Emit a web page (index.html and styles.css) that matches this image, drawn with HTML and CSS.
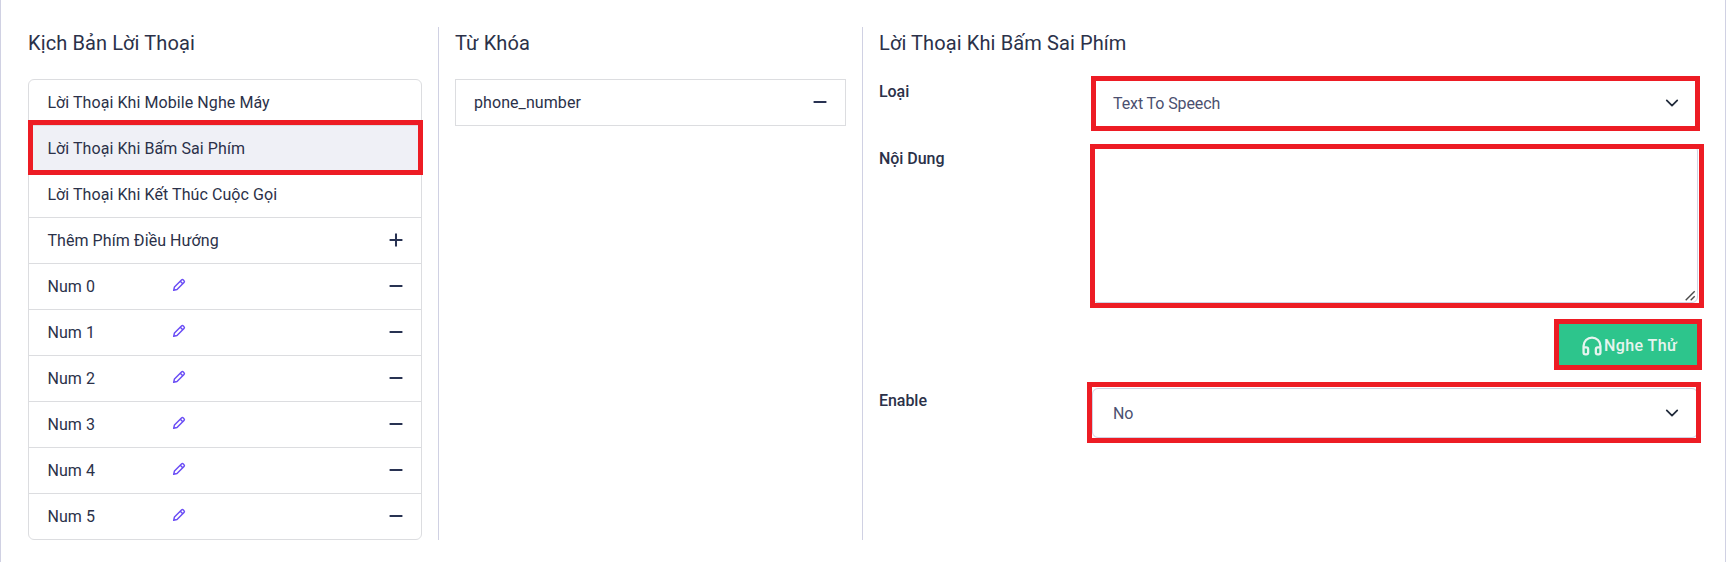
FILE: index.html
```html
<!DOCTYPE html>
<html lang="vi">
<head>
<meta charset="utf-8">
<title>Kịch Bản Lời Thoại</title>
<link rel="stylesheet" href="styles.css">
</head>
<body>
<svg class="defs" aria-hidden="true">
  <symbol id="minus" viewBox="0 0 24 24"><path d="M5 10.900h14v2.200H5z"/></symbol>
  <symbol id="plus" viewBox="0 0 24 24"><path d="M19 10.900h-5.900V5h-2.200v5.900H5v2.200h5.900V19h2.200v-5.900H19z"/></symbol>
  <symbol id="pencil" viewBox="0 0 24 24"><path fill="none" stroke="currentColor" stroke-width="2.200" stroke-linejoin="round" d="m4 20 1.200-5L15.700 4.500a2 2 0 0 1 2.800 0l1 1a2 2 0 0 1 0 2.800L9 18.800zM14 6.500l3.500 3.500"/></symbol>
  <symbol id="headphone" viewBox="0 0 24 24"><path fill="none" stroke="currentColor" stroke-width="2.500" d="M2.800 18.500V12a9.200 9.200 0 0 1 18.400 0v6.500M2.800 13.600h3A2 2 0 0 1 7.800 15.600v3.600A2 2 0 0 1 5.800 21.200H4.800A2 2 0 0 1 2.800 19.200zM21.200 13.600h-3a2 2 0 0 0-2 2v3.600a2 2 0 0 0 2 2h1a2 2 0 0 0 2-2z"/></symbol>
  <symbol id="chevron" viewBox="0 0 16 16"><path fill="none" stroke="currentColor" stroke-width="2" stroke-linecap="round" stroke-linejoin="round" d="m2 5 6 6 6-6"/></symbol>
</svg>
<main class="card">
  <section class="col scripts">
    <h5 class="title">Kịch Bản Lời Thoại</h5>
    <ul class="list rounded">
      <li class="item">Lời Thoại Khi Mobile Nghe Máy</li>
      <li class="item active">Lời Thoại Khi Bấm Sai Phím<span class="mark mark-item"></span></li>
      <li class="item">Lời Thoại Khi Kết Thúc Cuộc Gọi</li>
      <li class="item">Thêm Phím Điều Hướng<svg class="icon end"><use href="#plus"/></svg></li>
      <li class="item"><span class="key">Num 0</span><svg class="edit"><use href="#pencil"/></svg><svg class="icon end"><use href="#minus"/></svg></li>
      <li class="item"><span class="key">Num 1</span><svg class="edit"><use href="#pencil"/></svg><svg class="icon end"><use href="#minus"/></svg></li>
      <li class="item"><span class="key">Num 2</span><svg class="edit"><use href="#pencil"/></svg><svg class="icon end"><use href="#minus"/></svg></li>
      <li class="item"><span class="key">Num 3</span><svg class="edit"><use href="#pencil"/></svg><svg class="icon end"><use href="#minus"/></svg></li>
      <li class="item"><span class="key">Num 4</span><svg class="edit"><use href="#pencil"/></svg><svg class="icon end"><use href="#minus"/></svg></li>
      <li class="item"><span class="key">Num 5</span><svg class="edit"><use href="#pencil"/></svg><svg class="icon end"><use href="#minus"/></svg></li>
    </ul>
  </section>
  <section class="col keywords">
    <h5 class="title">Từ Khóa</h5>
    <ul class="list">
      <li class="item">phone_number<svg class="icon end"><use href="#minus"/></svg></li>
    </ul>
  </section>
  <section class="col detail">
    <h5 class="title">Lời Thoại Khi Bấm Sai Phím</h5>
    <div class="field">
      <span class="label">Loại</span>
      <div class="control select">Text To Speech<svg class="chevron"><use href="#chevron"/></svg><span class="mark mark-type"></span></div>
    </div>
    <div class="field">
      <span class="label">Nội Dung</span>
      <div class="control area"><textarea class="text"></textarea><svg class="grip" viewBox="0 0 11 11"><path d="M.7 10.300 9.700 1.300M5.700 10.300l4-4"/></svg><span class="mark mark-area"></span></div>
    </div>
    <div class="actions">
      <button class="listen"><svg class="headphone"><use href="#headphone"/></svg>Nghe Thử<span class="mark mark-listen"></span></button>
    </div>
    <div class="field">
      <span class="label label-enable">Enable</span>
      <div class="control select">No<svg class="chevron"><use href="#chevron"/></svg><span class="mark mark-enable"></span></div>
    </div>
  </section>
</main>
</body>
</html>
```
FILE: styles.css
```css
* { box-sizing: border-box; }
body {
  margin: 0;
  background: #fff;
  color: #2b3149;
  font: 400 16px/24px Roboto, "Noto Sans", sans-serif;
  letter-spacing: 0.075px;
  overflow: hidden;
}
.defs { position: absolute; width: 0; height: 0; }
.card {
  display: flex;
  align-items: flex-start;
  width: 1726px;
  height: 562px;
  padding: 27px 26px 0 27px;
  border: solid #d0d1e3;
  border-width: 0 1px;
}
.col { flex-shrink: 0; height: 513px; }
.scripts { width: 410px; padding-right: 16px; }
.keywords { width: 424px; padding: 0 16px; border-left: 1px solid #d0d1e3; }
.detail { width: 837px; padding-left: 16px; border-left: 1px solid #d0d1e3; }
.title {
  margin: 0 0 20px;
  padding-top: 1px;
  height: 32px;
  font-size: 20px;
  line-height: 30px;
  font-weight: 400;
  letter-spacing: 0.11px;
}
.list {
  margin: 0;
  padding: 0;
  list-style: none;
  border: 1px solid #dcdde0;
}
.rounded { border-radius: 6px; }
.item {
  position: relative;
  display: flex;
  align-items: center;
  height: 46px;
  padding: 0 14px 0 18px;
  border-bottom: 1px solid #dcdde0;
}
.rounded .item { padding-left: 18.4px; }
.item:last-child { height: 45px; border-bottom: 0; }
.active { background: #eff0f6; }
.key { width: 123.6px; }
.edit { width: 16px; height: 16px; margin-top: -3px; color: #6a4df5; }
.icon { width: 22px; height: 22px; margin-bottom: 1px; fill: #283252; }
.end { margin-left: auto; }
.mark {
  position: absolute;
  border: 5px solid #ed1c24;
  pointer-events: none;
}
.mark-item { inset: -6px -2px -4px -1px; }
.field {
  display: grid;
  grid-template-columns: 213px 606px;
}
.label { padding-top: 1px; font-weight: 500; letter-spacing: -0.05px; }
.label-enable { padding-top: 0; }
.control { position: relative; }
.select {
  display: flex;
  align-items: center;
  height: 50px;
  margin-top: -1px;
  padding: 1px 18px 0 20px;
  border: 1px solid #d0d1e3;
  border-radius: 6px;
  color: #4b5070;
  letter-spacing: -0.1px;
}
.field + .field { margin-top: 18px; }
.chevron { width: 14px; height: 14px; margin: -1px 0 0 auto; color: #212b3b; }
.area { height: 158px; margin-top: -1px; }
.text {
  display: block;
  width: 606px;
  height: 158px;
  border: 1px solid #d0d1e3;
  border-radius: 6px;
  background: #fff;
  resize: none;
}
.grip {
  position: absolute;
  right: 2px;
  bottom: 2px;
  width: 11px;
  height: 11px;
  fill: none;
  stroke: #4a4a4a;
  stroke-width: 1.4;
}
.mark-type { inset: -3px -3px -4px -2px; }
.mark-area { inset: -1px -6px -5px -2px; }
.mark-enable { inset: -7px -4px -6px -6px; }
.actions { display: flex; height: 86px; padding: 19px 0 0 678px; }
.listen {
  position: relative;
  display: flex;
  flex-shrink: 0;
  align-items: center;
  width: 142px;
  height: 45px;
  padding: 2px 0 0 24px;
  border: 0;
  background: #2dc58c;
  color: #e7f4ef;
  font: 500 16px/24px Roboto, "Noto Sans", sans-serif;
  letter-spacing: 0.4px;
}
.headphone { width: 22px; height: 22px; margin-right: 1px; }
.mark-listen { inset: -3px; }
```
